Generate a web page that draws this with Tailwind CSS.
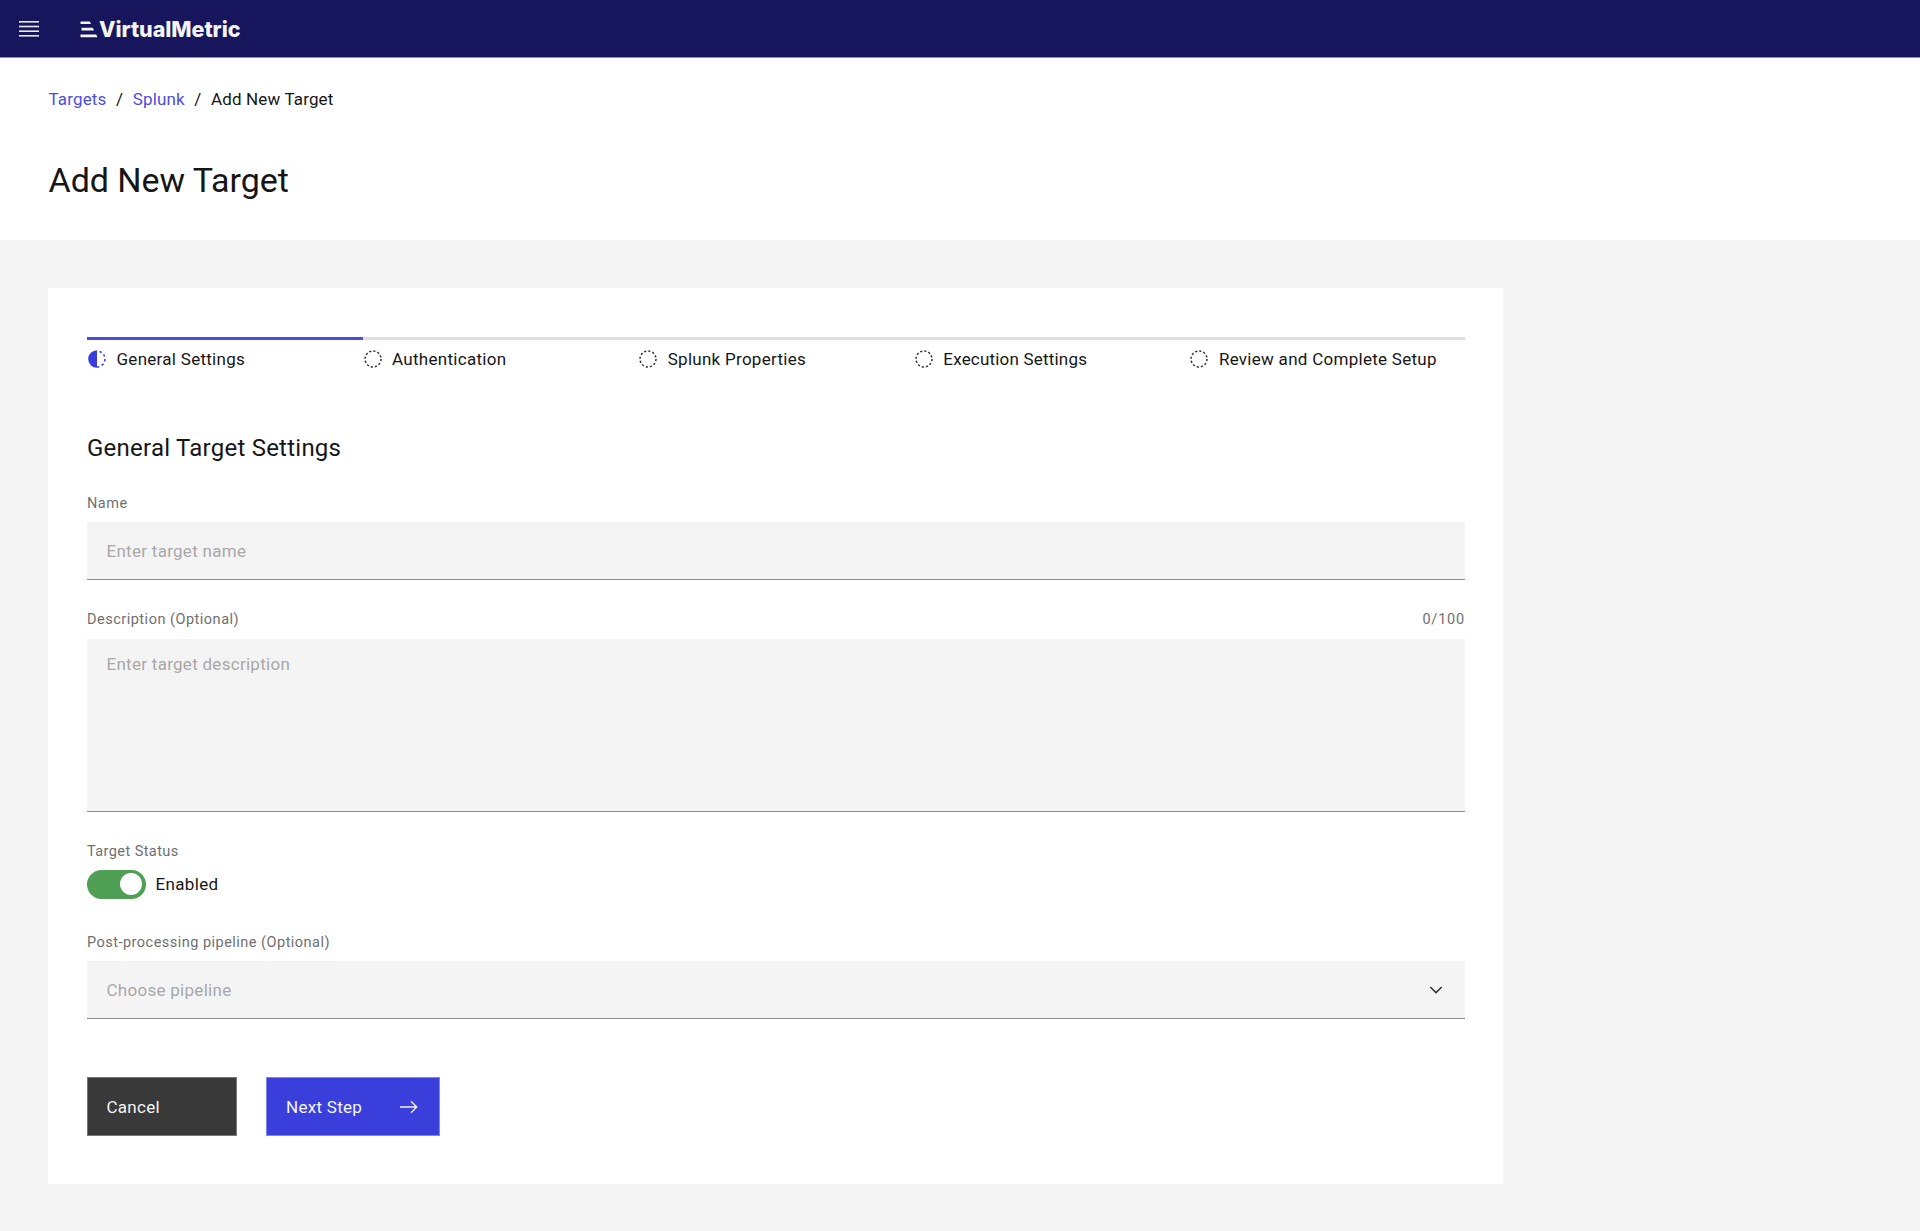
<!DOCTYPE html>
<html lang="en">
<head>
    <meta charset="UTF-8">
    <meta name="viewport" content="width=device-width, initial-scale=1.0">
    <title>VirtualMetric - Add New Target</title>
    <script src="https://cdn.jsdelivr.net/npm/@tailwindcss/browser@4"></script>
</head>
<body class="min-h-screen bg-[#f4f4f4] font-['Roboto','Liberation_Sans',sans-serif] text-[17px] leading-[22px] tracking-[0.28px] text-[#161616]">
    <header class="flex h-[58px] items-center border-b border-[#8f8cb4] bg-[#17165c] pl-[19px]">
        <button class="block">
            <svg class="block" width="20" height="16" viewBox="0 0 20 16" fill="#e8e8f0">
                <rect y="0" width="20" height="1.6" />
                <rect y="4.7" width="20" height="1.6" />
                <rect y="9.4" width="20" height="1.6" />
                <rect y="14" width="20" height="1.6" />
            </svg>
        </button>
        <a href="#" class="ml-[41px] flex items-center text-[#f4f4f4]">
            <svg class="mt-px mr-px" width="18" height="17" viewBox="0 0 18 17" fill="currentColor">
                <path d="M.5.4h9.3l1.2 2.6H.5zM1.5 6.8h11.3l1.2 2.6H1.5zM.5 13.4h15.6l1.5 2.9H.5z" />
            </svg>
            <span class="mt-px font-['Inter','Liberation_Sans',sans-serif] text-[21.5px] leading-[28px] font-extrabold tracking-[-0.05px]">VirtualMetric</span>
        </a>
    </header>

    <section class="h-[182px] bg-white px-[48.5px] pt-[30px]">
        <nav class="flex tracking-[0.15px]">
            <a href="#" class="text-[#4b4ede]">Targets</a>
            <span class="mx-[9.5px]">/</span>
            <a href="#" class="text-[#4b4ede]">Splunk</a>
            <span class="mx-[9.5px]">/</span>
            <span>Add New Target</span>
        </nav>
        <h1 class="mt-[48px] text-[34px] leading-[44px] tracking-[-0.05px]">Add New Target</h1>
    </section>

    <main class="pt-[48px] pl-[48px]">
        <div class="h-[896px] w-[1455px] bg-white pt-[49px] pr-[38px] pl-[39px]">
            <ol class="grid grid-cols-5">
                <li class="flex items-center border-t-[3px] border-[#4a4de0] pt-2">
                    <svg class="mr-[9.5px]" width="20" height="20" viewBox="0 0 20 20">
                        <path d="M10 1.2a8.8 8.8 0 0 0 0 17.6z" fill="#3a3fdb" />
                        <path d="M10 2a8 8 0 0 1 0 16" fill="none" stroke="#3a3fdb" stroke-width="1.6" stroke-dasharray="2.4 2.6" stroke-dashoffset="-2.6" />
                    </svg>
                    <span>General Settings</span>
                </li>
                <li class="flex items-center border-t-[3px] border-[#e0e0e0] pt-2">
                    <svg class="mr-[9.5px]" width="20" height="20" viewBox="0 0 20 20">
                        <circle cx="10" cy="10" r="8" fill="none" stroke="#333" stroke-width="1.5" stroke-dasharray="2.2 1.99" />
                    </svg>
                    <span>Authentication</span>
                </li>
                <li class="flex items-center border-t-[3px] border-[#e0e0e0] pt-2">
                    <svg class="mr-[9.5px]" width="20" height="20" viewBox="0 0 20 20">
                        <circle cx="10" cy="10" r="8" fill="none" stroke="#333" stroke-width="1.5" stroke-dasharray="2.2 1.99" />
                    </svg>
                    <span>Splunk Properties</span>
                </li>
                <li class="flex items-center border-t-[3px] border-[#e0e0e0] pt-2">
                    <svg class="mr-[9.5px]" width="20" height="20" viewBox="0 0 20 20">
                        <circle cx="10" cy="10" r="8" fill="none" stroke="#333" stroke-width="1.5" stroke-dasharray="2.2 1.99" />
                    </svg>
                    <span class="tracking-[0.2px]">Execution Settings</span>
                </li>
                <li class="flex items-center border-t-[3px] border-[#e0e0e0] pt-2">
                    <svg class="mr-[9.5px]" width="20" height="20" viewBox="0 0 20 20">
                        <circle cx="10" cy="10" r="8" fill="none" stroke="#333" stroke-width="1.5" stroke-dasharray="2.2 1.99" />
                    </svg>
                    <span>Review and Complete Setup</span>
                </li>
            </ol>

            <h2 class="mt-[61px] text-[24px] leading-[34px] tracking-[0.24px]">General Target Settings</h2>

            <label class="mt-[29px] block text-[14.5px] leading-[20px] tracking-[0.48px] text-[#6f6f6f]">Name</label>
            <div class="mt-[8px] flex h-[58px] items-center border-b border-[#8d8d8d] bg-[#f4f4f4] px-[19.5px] text-[#a8a8a8]">Enter target name</div>

            <div class="mt-[30px] flex justify-between text-[14.5px] leading-[20px] tracking-[0.5px] text-[#6f6f6f]">
                <label>Description (Optional)</label>
                <span class="tracking-[0.8px]">0/100</span>
            </div>
            <div class="mt-[9px] h-[173px] border-b border-[#8d8d8d] bg-[#f4f4f4] px-[19.5px] pt-[14px] text-[#a8a8a8]">Enter target description</div>

            <label class="mt-[30px] block text-[14.5px] leading-[20px] tracking-[0.42px] text-[#6f6f6f]">Target Status</label>
            <div class="mt-[7px] flex h-[30px] items-center">
                <button class="flex h-[29px] w-[59px] items-center justify-end rounded-full bg-[#4f9f54] pr-[4px]">
                    <span class="size-[22px] rounded-full bg-white"></span>
                </button>
                <span class="ml-[9.5px] tracking-[0.35px]">Enabled</span>
            </div>

            <label class="mt-[34px] block text-[14.5px] leading-[20px] tracking-[0.48px] text-[#6f6f6f]">Post-processing pipeline (Optional)</label>
            <div class="mt-[8px] flex h-[58px] items-center justify-between border-b border-[#8d8d8d] bg-[#f4f4f4] pr-[22px] pl-[19.5px] text-[#a8a8a8]">
                <span>Choose pipeline</span>
                <svg width="14" height="8" viewBox="0 0 14 8" fill="none" stroke="#333" stroke-width="1.5"><path d="M1.3 1l5.7 5.6L12.7 1" /></svg>
            </div>

            <div class="mt-[58px] flex gap-[29px]">
                <button class="flex h-[59px] w-[150px] items-center border border-[#777] bg-[#393939] pl-[18.5px] text-[#f4f4f4]">Cancel</button>
                <button class="flex h-[59px] w-[174px] items-center justify-between border border-[#8083ea] bg-[#3a3fdb] pr-[21px] pl-[19px] text-[#f4f4f4]">
                    <span>Next Step</span>
                    <svg width="18" height="14" viewBox="0 0 18 14" fill="none" stroke="currentColor" stroke-width="1.3"><path d="M0 7h16.4M11 1.2L16.8 7 11 12.8" /></svg>
                </button>
            </div>
        </div>
    </main>
</body>
</html>
